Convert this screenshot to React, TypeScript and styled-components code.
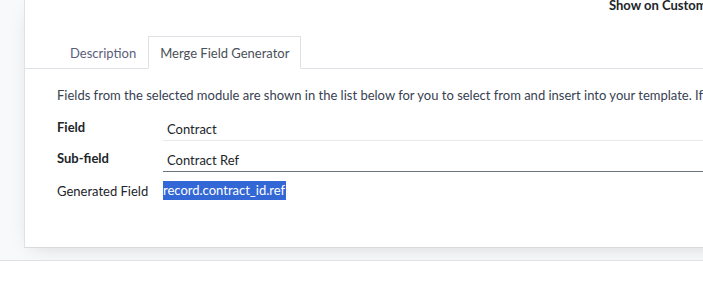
import styled, { createGlobalStyle } from 'styled-components';

const GlobalStyle = createGlobalStyle`
	html, body {
		margin: 0;
		padding: 0;
		background: #ffffff;
	}
	body {
		font-family: Lato, "Noto Sans", "Liberation Sans", sans-serif;
		font-size: 13px;
		color: #212529;
		overflow: hidden;
	}
`;

const Backdrop = styled.div`
	height: 261px;
	background: #f8f9fa;
	border-bottom: 1px solid #dee2e6;
	padding-left: 24px;
	box-sizing: border-box;
	overflow: hidden;
`;

const Sheet = styled.div`
	width: 760px;
	height: 248px;
	box-sizing: border-box;
	background: #ffffff;
	border-left: 1px solid #dee2e6;
	border-bottom: 1px solid #d8dadd;
	box-shadow: 0 5px 20px -8px rgba(0, 0, 0, 0.18);
	display: flex;
	flex-direction: column;
`;

const TopBar = styled.div`
	height: 36px;
	display: flex;
	justify-content: flex-start;
	padding-left: 584px;
`;

const TopLabel = styled.span`
	font-weight: 700;
	color: #212529;
	line-height: 13px;
	margin-top: -1px;
	white-space: nowrap;
`;

const TabList = styled.ul`
	list-style: none;
	margin: 0;
	padding: 0 0 0 33px;
	height: 32px;
	display: flex;
	border-bottom: 1px solid #dee2e6;
`;

const Tab = styled.li<{ $active?: boolean }>`
	display: flex;
	align-items: center;
	padding: 0 11px;
	margin-bottom: -1px;
	color: ${(p) => (p.$active ? '#495057' : '#5b5e7a')};
	background: ${(p) => (p.$active ? '#ffffff' : 'transparent')};
	border: 1px solid ${(p) => (p.$active ? '#dee2e6' : 'transparent')};
	border-bottom-color: ${(p) => (p.$active ? '#ffffff' : 'transparent')};
	white-space: nowrap;
`;

const Body = styled.div`
	padding: 17px 0 0 32px;
`;

const Hint = styled.p`
	margin: 0 0 6px;
	line-height: 18px;
	color: #374151;
	white-space: nowrap;
`;

const Row = styled.div<{ $height?: number }>`
	display: grid;
	grid-template-columns: 106px 1fr;
	align-items: end;
	height: ${(p) => p.$height ?? 31}px;
`;

const Label = styled.label<{ $bold?: boolean }>`
	font-weight: ${(p) => (p.$bold ? 700 : 400)};
	color: #212529;
	padding-bottom: ${(p) => (p.$bold ? '6px' : '1px')};
`;

const Value = styled.div<{ $focused?: boolean }>`
	padding: 0 0 2px 4px;
	line-height: 18px;
	border-bottom: 1px solid ${(p) => (p.$focused ? '#6c757d' : '#e7e9ed')};
`;

const Selected = styled.span`
	justify-self: start;
	background: #3367d6;
	color: #ffffff;
	line-height: 19px;
	padding: 0 1px 0 0;
`;

export default function App() {
	return (
		<>
			<GlobalStyle />
			<Backdrop>
				<Sheet>
					<TopBar>
						<TopLabel>Show on Customer Portal</TopLabel>
					</TopBar>
					<TabList>
						<Tab>Description</Tab>
						<Tab $active>Merge Field Generator</Tab>
					</TabList>
					<Body>
						<Hint>
							Fields from the selected module are shown in the list below for you to select from and insert into your template. If
						</Hint>
						<Row>
							<Label $bold>Field</Label>
							<Value>Contract</Value>
						</Row>
						<Row>
							<Label $bold>Sub-field</Label>
							<Value $focused>Contract Ref</Value>
						</Row>
						<Row $height={28}>
							<Label>Generated Field</Label>
							<Selected>record.contract_id.ref</Selected>
						</Row>
					</Body>
				</Sheet>
			</Backdrop>
		</>
	);
}
